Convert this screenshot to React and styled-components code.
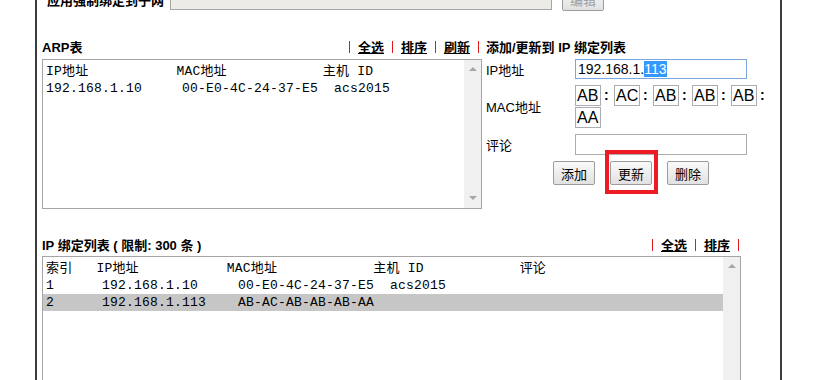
import React from "react";
import styled, { createGlobalStyle } from "styled-components";

const SANS = `"Liberation Sans", "Noto Sans CJK SC", sans-serif`;
const MONO = `"Liberation Mono", "Noto Sans CJK SC", monospace`;

const GlobalStyle = createGlobalStyle`
  html, body {
    margin: 0;
    padding: 0;
    background: #fff;
    overflow: hidden;
  }
  body {
    font-family: ${SANS};
    font-size: 13px;
    color: #000;
  }
`;

const Frame = styled.div`
  box-sizing: border-box;
  width: 747px;
  min-height: 420px;
  margin-left: 35px;
  padding-left: 5px;
  border-left: 2px solid #3c3c3c;
  border-right: 2px solid #3c3c3c;
`;

const Content = styled.div`
  margin-top: -12px;
`;

const TopRow = styled.div`
  display: flex;
  align-items: center;
  height: 23px;
`;

const TopLabel = styled.div`
  box-sizing: border-box;
  width: 128px;
  padding-left: 5px;
  font-weight: bold;
  white-space: nowrap;
`;

const DisabledField = styled.div`
  box-sizing: border-box;
  width: 382px;
  height: 21px;
  background: #ecebe6;
  border: 1px solid #a5a5a5;
`;

const Button = styled.button`
  box-sizing: border-box;
  width: 42px;
  height: ${(p) => p.$h || 24}px;
  margin-left: ${(p) => p.$ml || 0}px;
  padding: 0;
  border: 1px solid #9c9c9c;
  border-radius: 2px;
  background: linear-gradient(#fafafa, #e1e1e1);
  font-family: ${SANS};
  font-size: 13px;
  color: ${(p) => (p.disabled ? "#a0a0a0" : "#000")};
`;

const Section = styled.div`
  display: grid;
  grid-template-columns: 440px 290px;
  column-gap: 4px;
  row-gap: 4px;
  margin-top: 27px;
`;

const SectionHead = styled.div`
  box-sizing: border-box;
  display: flex;
  justify-content: space-between;
  align-items: center;
  height: 17px;
  width: ${(p) => (p.$w ? `${p.$w}px` : "auto")};
  padding-right: ${(p) => p.$trail}px;
  margin-top: ${(p) => p.$mt || 0}px;
`;

const Title = styled.div`
  font-weight: bold;
  white-space: nowrap;
`;

const Links = styled.div`
  display: flex;
  align-items: center;
`;

const Bar = styled.span`
  display: inline-block;
  width: 1px;
  height: 12px;
  background: #e3191f;
`;

const LinkText = styled.a`
  margin: 0 8px;
  font-weight: bold;
  color: #000;
  text-decoration: underline;
  cursor: pointer;
`;

const ListBox = styled.div`
  box-sizing: border-box;
  display: flex;
  width: ${(p) => p.$w}px;
  height: ${(p) => p.$h}px;
  margin-top: ${(p) => p.$mt || 0}px;
  border: 1px solid #a5a5a5;
  background: #fff;
  overflow: hidden;
`;

const ListBody = styled.div`
  flex: 1;
  padding-top: 3px;
  font-family: ${MONO};
  font-size: 13px;
  letter-spacing: 0.2px;
  line-height: 17px;
  white-space: pre;
`;

const ListRow = styled.div`
  height: 17px;
  padding-left: 3px;
  background: ${(p) => (p.$selected ? "#c6c6c6" : "transparent")};
`;

const ScrollTrack = styled.div`
  box-sizing: border-box;
  display: flex;
  flex-direction: column;
  justify-content: space-between;
  align-items: center;
  width: 17px;
  padding: 7px 0 8px;
  background: #f0f0f0;
`;

const Arrow = styled.span`
  width: 0;
  height: 0;
  border-left: 4px solid transparent;
  border-right: 4px solid transparent;
  ${(p) =>
    p.$down
      ? "border-top: 4px solid #a6a6a6;"
      : "border-bottom: 4px solid #a6a6a6;"}
`;

const Form = styled.div`
  display: flex;
  flex-direction: column;
  gap: 6px;
`;

const FormRow = styled.div`
  display: grid;
  grid-template-columns: 89px 201px;
  align-items: center;
`;

const Label = styled.div`
  white-space: nowrap;
`;

const TextField = styled.div`
  box-sizing: border-box;
  display: flex;
  align-items: center;
  width: 172px;
  height: ${(p) => p.$h || 21}px;
  padding-left: 2px;
  border: 1px solid ${(p) => (p.$focused ? "#7aa7dd" : "#abadb3")};
  font-size: 14px;
  white-space: pre;
`;

const Selected = styled.span`
  background: #3399ff;
  color: #fff;
`;

const MacGrid = styled.div`
  display: flex;
  flex-wrap: wrap;
  row-gap: 1px;
  width: 201px;
`;

const MacUnit = styled.div`
  display: flex;
`;

const MacBox = styled.div`
  box-sizing: border-box;
  width: 26px;
  height: 21px;
  padding-left: 1px;
  border: 1px solid #abadb3;
  font-size: 16px;
  line-height: 19px;
`;

const Colon = styled.span`
  box-sizing: border-box;
  width: 13px;
  padding-left: 3px;
  font-size: 14px;
  font-weight: bold;
  line-height: 21px;
`;

const ButtonRow = styled.div`
  display: flex;
  justify-content: center;
  gap: 15px;
`;

const Annotated = styled.div`
  position: relative;
  display: flex;

  &::after {
    content: "";
    position: absolute;
    top: -11px;
    left: -5px;
    right: -6px;
    bottom: -9px;
    border: 4px solid #ed1c24;
    pointer-events: none;
  }
`;

const sp = (n) => " ".repeat(n);

const arpRows = [
  `IP地址${sp(11)}MAC地址${sp(12)}主机 ID`,
  `192.168.1.10${sp(5)}00-E0-4C-24-37-E5${sp(2)}acs2015`,
];

const bindRows = [
  `索引${sp(3)}IP地址${sp(11)}MAC地址${sp(12)}主机 ID${sp(12)}评论`,
  `1${sp(6)}192.168.1.10${sp(5)}00-E0-4C-24-37-E5${sp(2)}acs2015`,
  `2${sp(6)}192.168.1.113${sp(4)}AB-AC-AB-AB-AB-AA`,
];

const macParts = ["AB", "AC", "AB", "AB", "AB", "AA"];

const LinkBar = ({ items }) => (
  <Links>
    <Bar />
    {items.map((item) => (
      <React.Fragment key={item}>
        <LinkText>{item}</LinkText>
        <Bar />
      </React.Fragment>
    ))}
  </Links>
);

const List = ({ rows, selected, w, h, mt }) => (
  <ListBox $w={w} $h={h} $mt={mt}>
    <ListBody>
      {rows.map((r, i) => (
        <ListRow key={i} $selected={i === selected}>
          {r}
        </ListRow>
      ))}
    </ListBody>
    <ScrollTrack>
      <Arrow />
      <Arrow $down />
    </ScrollTrack>
  </ListBox>
);

export default function App() {
  return (
    <>
      <GlobalStyle />
      <Frame>
        <Content>
          <TopRow>
            <TopLabel>应用强制绑定到子网</TopLabel>
            <DisabledField />
            <Button disabled $h={23} $ml={10}>
              编辑
            </Button>
          </TopRow>

          <Section>
            <SectionHead $trail={3}>
              <Title>ARP表</Title>
              <LinkBar items={["全选", "排序", "刷新"]} />
            </SectionHead>
            <SectionHead $trail={0}>
              <Title>添加/更新到 IP 绑定列表</Title>
            </SectionHead>

            <List rows={arpRows} w={440} h={150} />

            <Form>
              <FormRow>
                <Label>IP地址</Label>
                <TextField $focused $h={20}>
                  192.168.1.<Selected>113</Selected>
                </TextField>
              </FormRow>
              <FormRow>
                <Label>MAC地址</Label>
                <MacGrid>
                  {macParts.map((m, i) => (
                    <MacUnit key={i}>
                      <MacBox>{m}</MacBox>
                      {i < macParts.length - 1 && <Colon>:</Colon>}
                    </MacUnit>
                  ))}
                </MacGrid>
              </FormRow>
              <FormRow>
                <Label>评论</Label>
                <TextField />
              </FormRow>
              <ButtonRow>
                <Button>添加</Button>
                <Annotated>
                  <Button>更新</Button>
                </Annotated>
                <Button>删除</Button>
              </ButtonRow>
            </Form>
          </Section>

          <SectionHead $trail={2} $w={699} $mt={27}>
            <Title>IP 绑定列表 ( 限制: 300 条 )</Title>
            <LinkBar items={["全选", "排序"]} />
          </SectionHead>
          <List rows={bindRows} selected={2} w={699} h={144} mt={3} />
        </Content>
      </Frame>
    </>
  );
}
